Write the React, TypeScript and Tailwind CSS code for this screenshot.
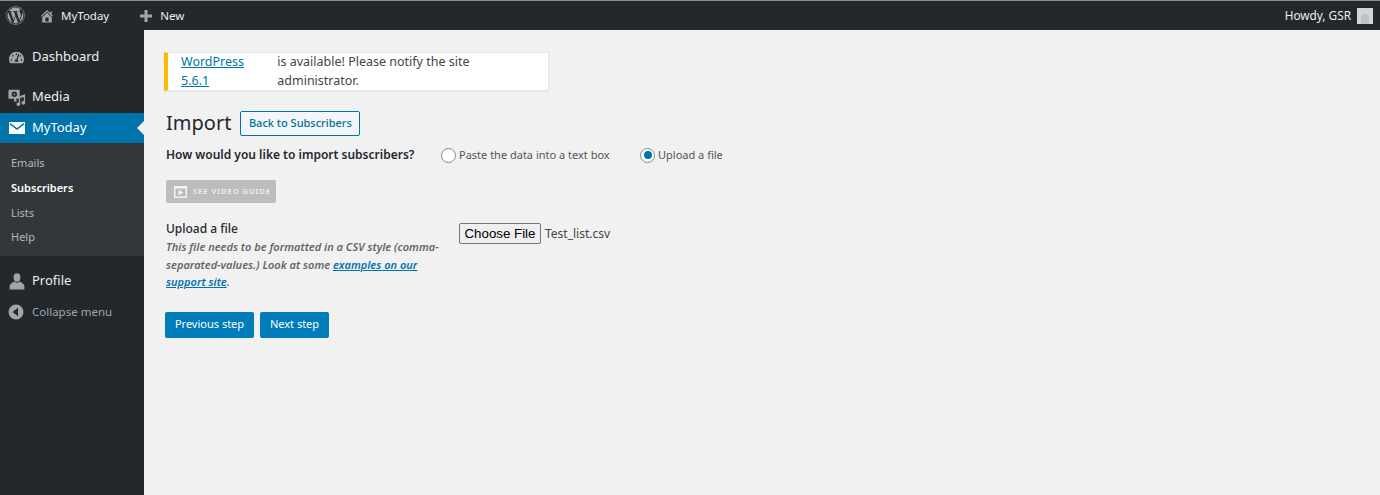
import React from "react";
import { FaWordpress, FaTachometerAlt } from "react-icons/fa";

const Home = () => (
  <svg width="16" height="16" viewBox="0 0 20 20" className="fill-[#a0a5aa]">
    <path d="M16 8.5l1.53 1.53-1.06 1.06L10 4.62l-6.47 6.47-1.06-1.06L10 2.5l4 4v-2h2v4zm-6-2.46l6 5.99V18H4v-5.97zM12 17v-5H8v5h4z" />
  </svg>
);
const Plus = () => (
  <svg width="14" height="14" viewBox="0 0 14 14" className="fill-[#a0a5aa]">
    <path d="M5.5 1h3v4.5H13v3H8.5V13h-3V8.5H1v-3h4.5z" />
  </svg>
);
const Media = () => (
  <svg width="18" height="18" viewBox="0 0 20 20" className="fill-[#a0a5aa]">
    <path d="M1.5 2h11a.5.5 0 0 1 .5.5V11a1 1 0 0 1-1 1H9l.8 3H6.5L7 12H1.5A1 1 0 0 1 .5 11V3a1 1 0 0 1 1-1zm5.5 2a3 3 0 0 0-3 3 3 3 0 0 0 3 3 3 3 0 0 0 0-6zm0 2a1 1 0 1 1 0 2 1 1 0 0 1 0-2z" fillRule="evenodd" />
    <path d="M19 7v9.5a2 2 0 1 1-1.5-1.9V10l-4 1v7a2 2 0 1 1-1.5-1.9V12l1-3z" />
  </svg>
);
const Mail = () => (
  <svg width="16" height="12" viewBox="0 0 16 12">
    <path className="fill-white" d="M0 0h16v12H0z" />
    <path d="M1 1.6l7 5.4 7-5.4" fill="none" stroke="#0073aa" strokeWidth="1.5" />
  </svg>
);
const User = () => (
  <svg width="16" height="17" viewBox="0 0 16 17" className="fill-[#a0a5aa]">
    <ellipse cx="8" cy="4.5" rx="3.4" ry="4.2" />
    <path d="M5.5 8.5C3 9.5 1 11 .6 13v3.6h14.8V13c-.4-2-2.4-3.500-4.900-4.500C10 10 6 10 5.500 8.500z" />
  </svg>
);
const Collapse = () => (
  <svg width="16" height="16" viewBox="0 0 16 16">
    <circle cx="8" cy="8" r="7.500" className="fill-[#a0a5aa]" />
    <path d="M10 3.800v8.400L4.500 8z" fill="#23282d" />
  </svg>
);
const Video = () => (
  <svg width="13" height="12" viewBox="0 0 13 12">
    <path d="M0 0h13v12H0z" fill="#f4f4f4" />
    <path d="M1.500 2.500h10v8h-10z" fill="#bdbdbd" />
    <path d="M4.500 3.800v5.400L9.300 6.500z" fill="#f4f4f4" />
  </svg>
);

const NavItem = ({ icon, label, className = "" }: { icon: React.ReactNode; label: string; className?: string }) => (
  <div className={`flex items-center ${className}`}>
    <span className="flex w-[32px] justify-center pl-[1px]">{icon}</span>
    <span>{label}</span>
  </div>
);

export default function App() {
  return (
    <div className="flex h-[495px] w-[1380px] flex-col overflow-hidden bg-[#f1f1f1] font-['Noto_Sans',sans-serif] text-[12.500px] text-[#444]">
      <div className="h-[1px] bg-[#8c8f94]" />
      <header className="flex h-[29px] items-center justify-between bg-[#23282d] text-[11.500px] text-[#eeeeee]">
        <div className="flex items-center">
          <FaWordpress className="ml-[6px] h-[19px] w-[19px] text-[#a0a5aa]" />
          <span className="ml-[14px]"><Home /></span>
          <span className="ml-[6px]">MyToday</span>
          <span className="ml-[30px]"><Plus /></span>
          <span className="ml-[7px]">New</span>
        </div>
        <div className="flex items-center">
          <span className="text-[11.800px]">Howdy, GSR</span>
          <span className="ml-[6px] mr-[7px] flex h-[16px] w-[16px] items-end justify-center bg-[#d5d5d5]">
            <span className="h-[10px] w-[8px] rounded-t-full bg-[#c2c2c2]" />
          </span>
        </div>
      </header>
      <div className="flex min-h-0 flex-1">
        <aside className="w-[144px] shrink-0 bg-[#23282d] text-[13px] text-[#eeeeee]">
          <NavItem className="mt-[16px] h-[22px]" icon={<FaTachometerAlt className="h-[15px] w-[15px] text-[#a0a5aa]" />} label="Dashboard" />
          <NavItem className="mt-[18px] h-[22px]" icon={<Media />} label="Media" />
          <div className="relative mt-[5px] flex h-[30px] items-center bg-[#0073aa] text-white">
            <span className="flex w-[32px] justify-center pl-[1px]"><Mail /></span>
            <span>MyToday</span>
            <span className="absolute right-0 top-[8px] h-0 w-0 border-y-[7px] border-r-[7px] border-y-transparent border-r-[#f1f1f1]" />
          </div>
          <div className="flex h-[113px] flex-col bg-[#32373c] pl-[11px] pt-[7px] text-[11px] text-[#b4b9be]">
            <div className="h-[25px] leading-[25px]">Emails</div>
            <div className="h-[25px] font-semibold leading-[25px] text-white">Subscribers</div>
            <div className="h-[24px] leading-[25px]">Lists</div>
            <div className="h-[24px] leading-[25px]">Help</div>
          </div>
          <NavItem className="mt-[14px] h-[22px]" icon={<User />} label="Profile" />
          <div className="mt-[10px] flex h-[20px] items-center text-[11.500px] text-[#a0a5aa]">
            <span className="flex w-[32px] justify-center"><Collapse /></span>
            <span>Collapse menu</span>
          </div>
        </aside>
        <main className="min-w-0 flex-1 pl-[20px]">
          <div className="mt-[22px] flex h-[39px] w-[385px] items-center border border-[#e5e5e5] border-l-[4px] border-l-[#ffb900] bg-white pl-[13px] text-[12.500px] shadow-[0_1px_1px_rgba(0,0,0,0.04)]">
            <a className="text-[#0073aa] underline">WordPress 5.6.1</a>
            <span className="ml-[4px]">is available! Please notify the site administrator.</span>
          </div>
          <div className="mt-[19px] flex items-center pl-[2px]">
            <h1 className="text-[20px] leading-[26px] text-[#23282d]">Import</h1>
            <a className="ml-[9px] flex h-[25px] w-[120px] items-center justify-center rounded-[2px] border border-[#0073aa] bg-[#f3f5f6] text-[11px] font-medium text-[#0071a1]">Back to Subscribers</a>
          </div>
          <div className="mt-[9px] flex h-[20px] items-center pl-[2px]">
            <span className="w-[275px] text-[12px] font-semibold text-[#23282d]">How would you like to import subscribers?</span>
            <span className="h-[15px] w-[15px] rounded-full border border-[#7e8993] bg-white" />
            <span className="ml-[3px] w-[181px] text-[11px] text-[#555]">Paste the data into a text box</span>
            <span className="flex h-[15px] w-[15px] items-center justify-center rounded-full border border-[#7e8993] bg-white">
              <span className="h-[8px] w-[8px] rounded-full bg-[#0073aa]" />
            </span>
            <span className="ml-[3px] text-[11px] text-[#555]">Upload a file</span>
          </div>
          <div className="ml-[2px] mt-[15px] flex h-[23px] w-[110px] items-center rounded-[2px] bg-[#bdbdbd] pl-[8px]">
            <Video />
            <span className="ml-[6px] text-[7.500px] font-semibold tracking-[1px] text-[#f1f1f1]">SEE VIDEO GUIDE</span>
          </div>
          <div className="mt-[17px] flex pl-[2px]">
            <div className="w-[293px]">
              <div className="text-[12px] font-medium leading-[18px] text-[#23282d]">Upload a file</div>
              <p className="w-[276px] text-[11px] font-semibold italic leading-[17.500px] text-[#666]">
                This file needs to be formatted in a CSV style (comma-separated-values.) Look at some <a className="text-[#0073aa] underline">examples on our support site</a>.
              </p>
            </div>
            <div className="mt-[3px] flex h-[21px] items-center">
              <button className="h-[21px] w-[82px] rounded-[2px] border border-[#767676] bg-[#efefef] font-['Liberation_Sans',sans-serif] text-[13.300px] text-black">Choose File</button>
              <span className="ml-[4px] text-[12px] text-[#444]">Test_list.csv</span>
            </div>
          </div>
          <div className="mt-[21px] flex gap-[6px] pl-[1px]">
            <button className="h-[26px] w-[89px] rounded-[2px] bg-[#007cba] text-[11px] text-white">Previous step</button>
            <button className="h-[26px] w-[69px] rounded-[2px] bg-[#007cba] text-[11px] text-white">Next step</button>
          </div>
        </main>
      </div>
    </div>
  );
}
